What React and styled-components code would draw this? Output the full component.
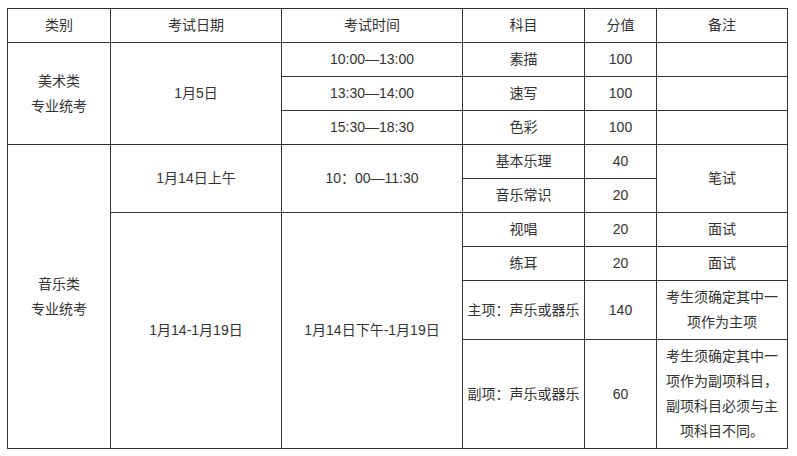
import React from 'react'
import styled, { createGlobalStyle } from 'styled-components'

const GlobalStyle = createGlobalStyle`
  body {
    margin: 8px 7px;
    background: #fff;
    font-family: "Liberation Sans", "Noto Sans CJK SC", sans-serif;
    color: #333;
  }
`

const Table = styled.table`
  border-collapse: collapse;
  table-layout: fixed;
  width: 780px;
  font-size: 14px;
  line-height: 25px;
`

const Cell = styled.td`
  border: 1px solid #333;
  padding: 4px 3px;
  text-align: center;
  vertical-align: middle;
  word-break: break-all;
  white-space: ${p => (p.$nowrap ? 'nowrap' : 'normal')};
`

const HeadCell = styled(Cell).attrs({ as: 'th' })`
  font-weight: normal;
`

const widths = [103, 171, 181, 122, 72, 131]

const artRows = [
  ['10:00—13:00', '素描', '100'],
  ['13:30—14:00', '速写', '100'],
  ['15:30—18:30', '色彩', '100'],
]

const App = () => {
  return (
    <>
      <GlobalStyle />
      <Table>
        <colgroup>
          {widths.map((w, i) => <col key={i} style={{ width: w }} />)}
        </colgroup>
        <thead>
          <tr>
            <HeadCell>类别</HeadCell>
            <HeadCell>考试日期</HeadCell>
            <HeadCell>考试时间</HeadCell>
            <HeadCell>科目</HeadCell>
            <HeadCell>分值</HeadCell>
            <HeadCell>备注</HeadCell>
          </tr>
        </thead>
        <tbody>
          {artRows.map((row, i) => (
            <tr key={row[0]}>
              {i === 0 && <Cell rowSpan={3}>美术类<br />专业统考</Cell>}
              {i === 0 && <Cell rowSpan={3}>1月5日</Cell>}
              <Cell>{row[0]}</Cell>
              <Cell>{row[1]}</Cell>
              <Cell>{row[2]}</Cell>
              <Cell></Cell>
            </tr>
          ))}
          <tr>
            <Cell rowSpan={6}>音乐类<br />专业统考</Cell>
            <Cell rowSpan={2}>1月14日上午</Cell>
            <Cell rowSpan={2}>10：00—11:30</Cell>
            <Cell>基本乐理</Cell>
            <Cell>40</Cell>
            <Cell rowSpan={2}>笔试</Cell>
          </tr>
          <tr>
            <Cell>音乐常识</Cell>
            <Cell>20</Cell>
          </tr>
          <tr>
            <Cell rowSpan={4}>1月14-1月19日</Cell>
            <Cell rowSpan={4}>1月14日下午-1月19日</Cell>
            <Cell>视唱</Cell>
            <Cell>20</Cell>
            <Cell>面试</Cell>
          </tr>
          <tr>
            <Cell>练耳</Cell>
            <Cell>20</Cell>
            <Cell>面试</Cell>
          </tr>
          <tr>
            <Cell $nowrap>主项：声乐或器乐</Cell>
            <Cell>140</Cell>
            <Cell>考生须确定其中一项作为主项</Cell>
          </tr>
          <tr>
            <Cell $nowrap>副项：声乐或器乐</Cell>
            <Cell>60</Cell>
            <Cell>考生须确定其中一项作为副项科目，副项科目必须与主项科目不同。</Cell>
          </tr>
        </tbody>
      </Table>
    </>
  )
}

export default App
